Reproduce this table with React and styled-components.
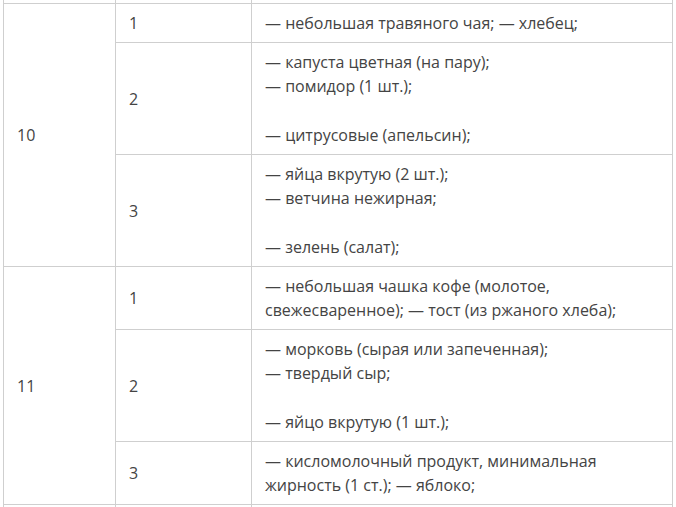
import styled, { createGlobalStyle } from "styled-components";

const GlobalStyle = createGlobalStyle`
  html, body {
    margin: 0;
    padding: 0;
    background: #fff;
  }
  body {
    font-family: "Open Sans", "Liberation Sans", sans-serif;
    color: #444;
    overflow: hidden;
  }
`;

const Page = styled.div`
  padding: 0 4px 0 3px;
  height: 507px;
  overflow: hidden;
`;

// the first visible row is the tail of the previous day, so the table is cropped from the top
const Table = styled.table`
  border-collapse: collapse;
  width: 670px;
  table-layout: fixed;
  margin-top: -36px;
  font-size: 16px;
  line-height: 24px;
`;

const Cell = styled.td`
  border: 1px solid #cfcfcf;
  padding: 7px 12px 7px 13px;
  vertical-align: middle;
  text-align: left;
  height: ${(p) => (p.$tall ? "97px" : "auto")};
`;

const Gap = styled.span`
  display: block;
  height: 25px;
`;

const days = [
  {
    day: 9,
    meals: [{ n: 3, lines: ["— рыба отварная;"] }],
  },
  {
    day: 10,
    meals: [
      { n: 1, lines: ["— небольшая травяного чая; — хлебец;"] },
      {
        n: 2,
        lines: ["— капуста цветная (на пару);", "— помидор (1 шт.);"],
        tail: "— цитрусовые (апельсин);",
      },
      {
        n: 3,
        lines: ["— яйца вкрутую (2 шт.);", "— ветчина нежирная;"],
        tail: "— зелень (салат);",
      },
    ],
  },
  {
    day: 11,
    meals: [
      {
        n: 1,
        lines: ["— небольшая чашка кофе (молотое, свежесваренное); — тост (из ржаного хлеба);"],
      },
      {
        n: 2,
        lines: ["— морковь (сырая или запеченная);", "— твердый сыр;"],
        tail: "— яйцо вкрутую (1 шт.);",
      },
      {
        n: 3,
        lines: ["— кисломолочный продукт, минимальная жирность (1 ст.); — яблоко;"],
      },
    ],
  },
  {
    day: 12,
    meals: [{ n: 1, lines: ["— чай зеленый;"] }],
  },
];

function Meal({ meal }) {
  return (
    <Cell $tall={!!meal.tail}>
      {meal.lines.map((l, i) => (
        <span key={i}>
          {l}
          {i < meal.lines.length - 1 && <br />}
        </span>
      ))}
      {meal.tail && (
        <>
          <Gap />
          {meal.tail}
        </>
      )}
    </Cell>
  );
}

export default function App() {
  return (
    <>
      <GlobalStyle />
      <Page>
        <Table>
          <colgroup>
            <col style={{ width: "112px" }} />
            <col style={{ width: "136px" }} />
            <col />
          </colgroup>
          <tbody>
            {days.map((d) =>
              d.meals.map((m, i) => (
                <tr key={d.day + "-" + m.n}>
                  {i === 0 && <Cell rowSpan={d.meals.length}>{d.day}</Cell>}
                  <Cell>{m.n}</Cell>
                  <Meal meal={m} />
                </tr>
              ))
            )}
          </tbody>
        </Table>
      </Page>
    </>
  );
}
